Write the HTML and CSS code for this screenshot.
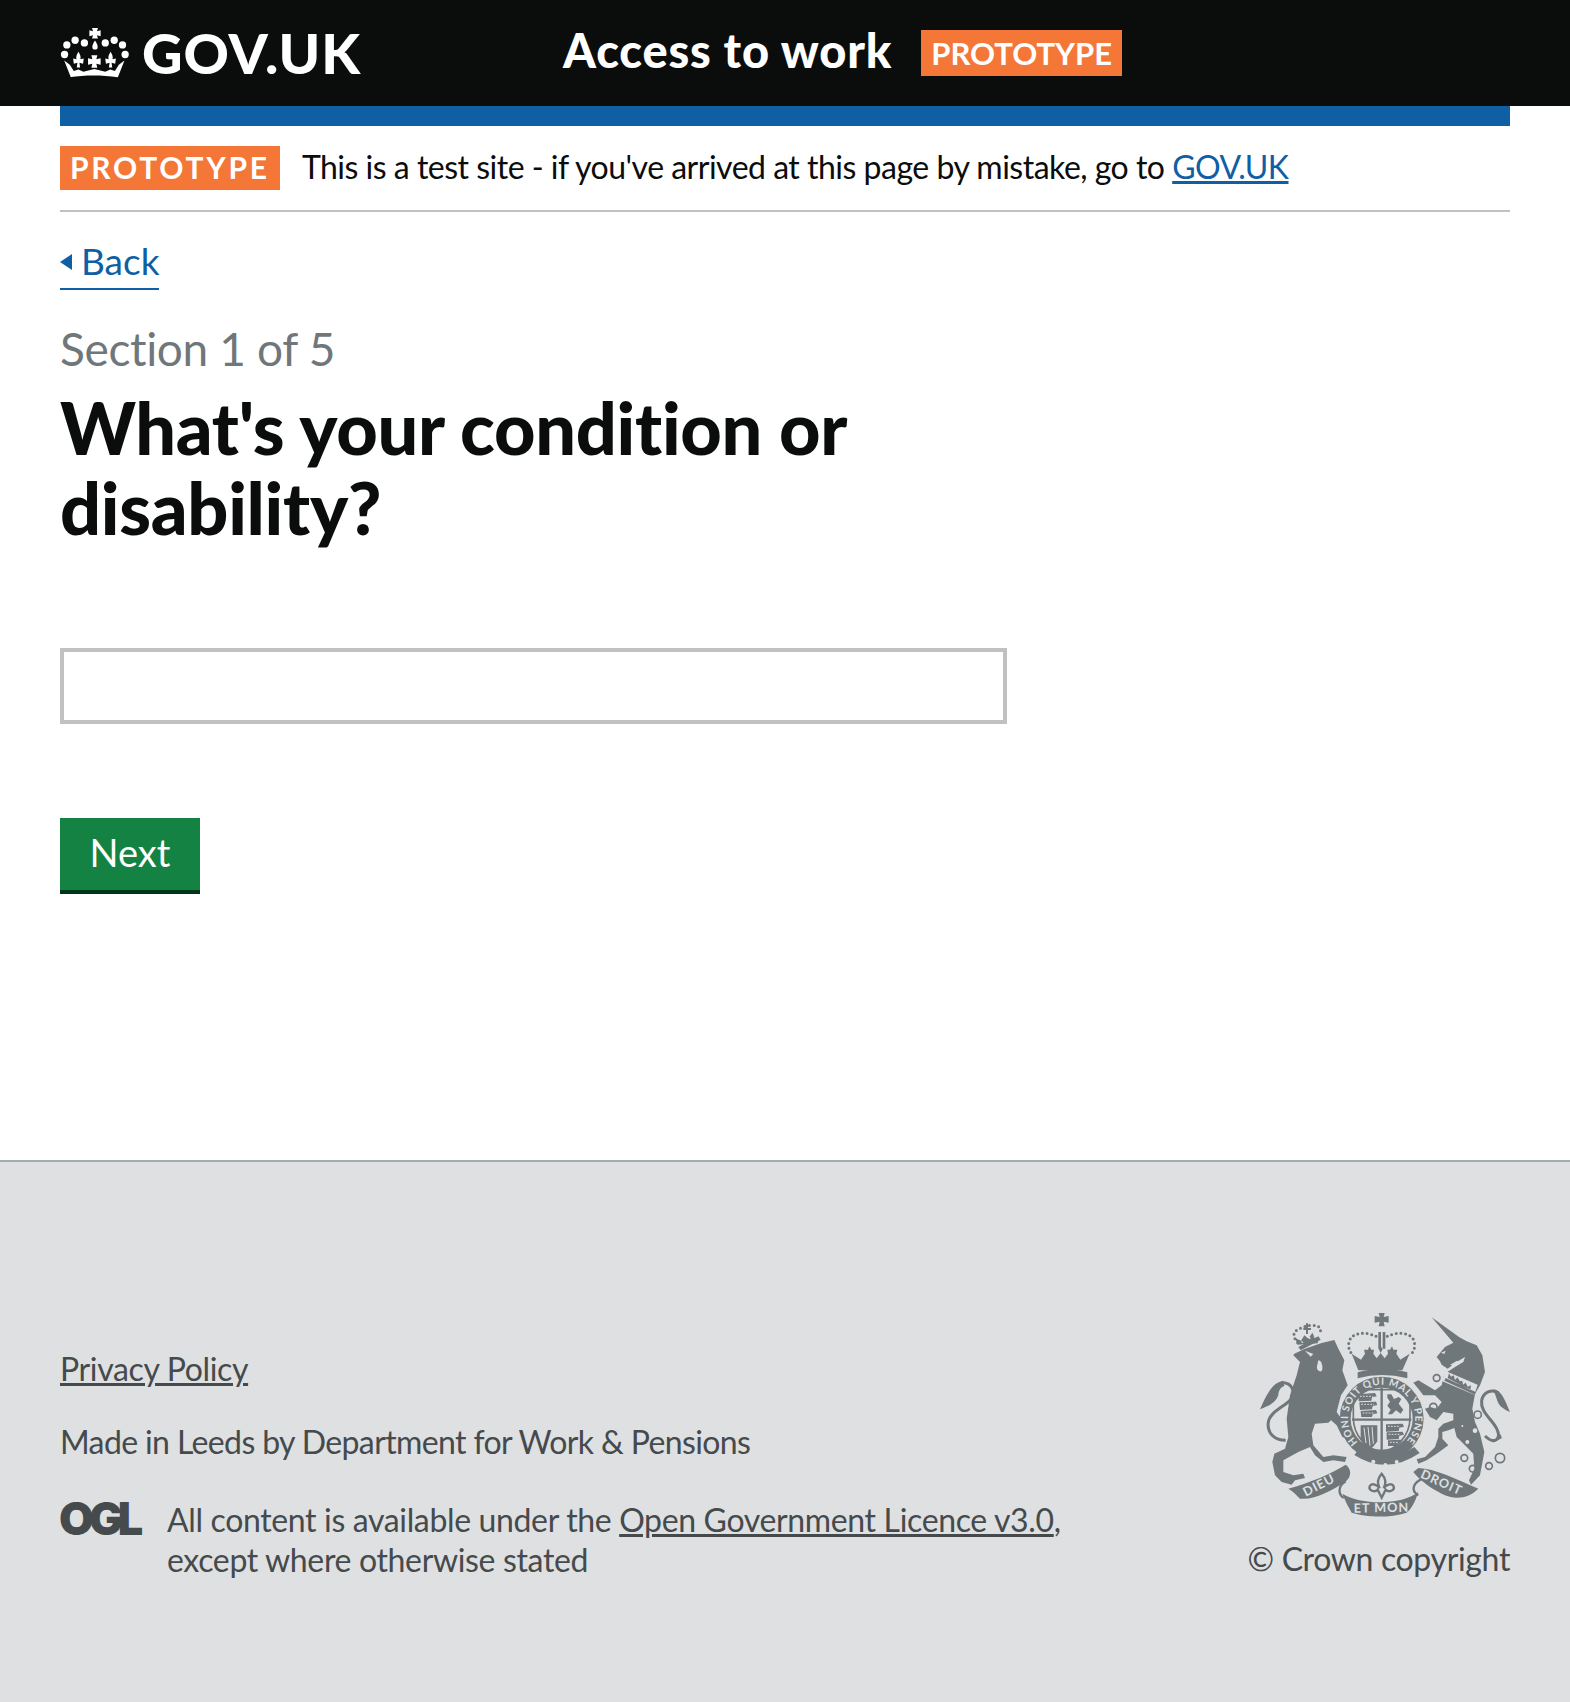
FILE: index.html
```html
<!DOCTYPE html>
<html lang="en">
<head>
<meta charset="utf-8">
<title>Access to work</title>
<link rel="stylesheet" href="styles.css">
</head>
<body>
<header class="masthead">
  <a class="logo" href="#">
    <svg class="crown" viewBox="30 45 210 160" aria-hidden="true">
      <g fill="#fff">
        <path d="M126 48h18l-3 10 11-3v18l-11-3 3 10h-18l3-10-11 3V55l11 3z"/>
        <path d="M135 86c5 8 8 13 8 19a8 8 0 0 1-16 0c0-6 3-11 8-19z"/>
        <circle cx="43" cy="128" r="11"/><circle cx="50" cy="99" r="11"/><circle cx="75" cy="85" r="11"/><circle cx="103" cy="93" r="11"/>
        <circle cx="166" cy="93" r="11"/><circle cx="193" cy="85" r="11"/><circle cx="218" cy="99" r="11"/><circle cx="226" cy="128" r="11"/>
        <path d="M85 120c5 8 8 14 6 22l10-2-2 16-11-3 2 14h-10l2-14-11 3-2-16 10 2c-2-8 1-14 6-22z"/>
        <path d="M182 120c5 8 8 14 6 22l10-2-2 16-11-3 2 14h-10l2-14-11 3-2-16 10 2c-2-8 1-14 6-22z"/>
        <path d="M124 130h18l-3 12 13-3v20l-13-3 3 12h-18l3-12-13 3v-20l13 3z"/>
        <path d="M62 197L42 146l17 13 12 19 14-5 15 7 33-8 33 8 15-7 14 5 12-19 17-13-20 51c-49-7-97-7-146 0z"/>
      </g>
    </svg>
    <span class="logo-text">GOV.UK</span>
  </a>
  <a class="service" href="#">Access to work</a>
  <strong class="head-tag">PROTOTYPE</strong>
</header>

<div class="page">
  <div class="bluebar"></div>
  <div class="phase">
    <strong class="phase-tag">PROTOTYPE</strong>
    <span class="phase-text">This is a test site - if you've arrived at this page by mistake, go to <a href="#">GOV.UK</a></span>
  </div>

  <a class="back" href="#"><span class="arrow"></span>Back</a>

  <main>
    <p class="caption">Section 1 of 5</p>
    <h1>What's your condition or disability?</h1>
    <input class="field" type="text" aria-label="What's your condition or disability?">
    <button class="next" type="button">Next</button>
  </main>
</div>

<footer class="foot">
  <div class="foot-left">
    <a class="plain" href="#">Privacy Policy</a>
    <p class="made">Made in Leeds by Department for Work &amp; Pensions</p>
    <div class="licence">
      <svg class="ogl" viewBox="0 0 82 34"><text x="-1" y="33" class="ogl-text">OGL</text></svg>
      <p>All content is available under the <a class="plain" href="#">Open Government Licence v3.0</a>, except where otherwise stated</p>
    </div>
  </div>
  <div class="foot-right">
    <svg class="crest" viewBox="15 20 750 615" aria-hidden="true">
      <g class="ink">
        <!-- lion -->
        <path d="M118 145l32-15 50-17 38-9 12 26 18 35-6 30 16 45-20 30-8 30-5 20 17 25 23 33-3 24-20-7-17-35-17-15-8 7-40 3-10 30 5 35 30 35 30-5 40 5-5 15-35-5-30 5-25-20-15-25-35 15-45 25v35l30 10 30-5 5 13-30 7-10 13-30-8-20-20-8-40 6-25 32-15 10-35-5-55 10-70 20-60 10-40-20-20z"/>
        <path class="thin" d="M92 405C60 405 35 385 40 350c5-30 45-45 65-65 20-25 5-55-25-53"/>
        <path d="M85 226C55 232 40 255 15 312c25-10 45-17 55-42 0-15 8-25 18-28z"/>
        <path class="bgfill" d="M150 136l25 10-8 8zM190 165q10 0 12 18t-8 15q-10-3-8-15z"/>
        <!-- lion crown -->
        <path d="M130 125l60-32 7 10-60 32z"/>
        <path d="M128 118l-8-20 18 8 10-16 12 10 12-18 8 16 12-4-4 20z"/>
        <path class="bgfill" d="M138 106l3 8 5-3zM160 92l3 10 5-3zM176 92l1 6 4-2z"/>
        <path class="beads" d="M128 112c-10-10-18-28-2-38 14-8 30-14 48-14 15 0 25 6 22 22"/>
        <path d="M145 68h8v-14h6v14h9v6h-9v12h-6v-12h-8z"/>

        <g transform="translate(-75 -45)">
          <!-- main crown -->
          <path d="M446 68h18l-3 12 15-3v20l-15-3 3 14h-18l3-14-15 3V77l15 3z"/>
          <path d="M445 125h8v50h-8zM458 125h8v50h-8z"/>
          <path d="M365 190l28 18 12-18-3-12 12 0 4-10 6 10 8 0-2 12 10 14 12-16-6-12 6-8 6 8-6 12 12 16 10-14-2-12 8 0 6-10 4 10 12 0-3 12 12 18 28-18-22 50h-132z"/>
          <path d="M383 246q72-22 149 0v18q-77-20-149 0z"/>
          <path class="beads" d="M438 138c-30-15-80-14-82 24-1 12 4 20 9 28"/>
          <path class="beads" d="M472 138c30-15 80-14 82 24 1 12-4 20-9 28"/>
          <!-- garter -->
          <circle cx="455" cy="385" r="126"/>
          <circle class="bgfill" cx="455" cy="385" r="93"/>
          <path class="thin-s" d="M370 298h170v85c0 55-40 90-85 108-45-18-85-53-85-108z"/>
          <path class="mid" d="M455 292v200M366 388h178"/>
          <!-- quarterings -->
          <g>
            <path d="M385 312l50-4 5 10-14 3-2 10-38 2zM388 336l50-2 4 10-14 3-2 10-36 2zM392 362l46-3 4 10-14 3-2 8-32 0z" />
            <path d="M472 312h12l8 14 14-6 8 6-8 14 14 18-8 12-14-10-12 12h-12l8-14-10-12 8-12-8-12z"/>
            <path d="M468 402l50-2 4 9-14 3-2 10-38 2zM470 426l48-2 4 9-14 3-2 10-36 2zM474 450l38-2 2 8-12 3-2 8-26 0z"/>
            <path d="M392 405h50v48c-10 15-18 22-25 28-12-10-22-25-25-40z"/>
          </g>
          <path class="bg-line" d="M402 412l6 46M414 410l6 56M426 410l4 50"/>
          <path class="bg-dash" d="M390 318h38M394 342h38M398 368h34M474 408h36M476 432h34M480 456h24"/>
          <!-- motto base -->
          <path d="M385 478q70 55 168-8l16 18q-100 68-196 6z"/>
          <circle class="bgfill" cx="430" cy="514" r="6"/><circle class="bgfill" cx="466" cy="524" r="6"/><circle class="bgfill" cx="500" cy="515" r="6"/>
          <!-- fleur -->
          <path class="thin-m" d="M455 550c14 16 14 30 6 44 6-10 24-18 30-6 4 12-14 20-24 10l-12 24-12-24c-10 10-28 2-24-10 6-12 24-4 30 6-8-14-8-28 6-44z"/>
        </g>

        <!-- unicorn -->
        <g transform="translate(390 0)">
          <path d="M140 36l82 59 23 13 30 12 17 30 8 50-15 40-15 25-8 45 8 40 15 35 13 55-13 70-27 28-6-13 16-35-3-45-25-25-25-25-7-27-18 7-18 5v20l18 20-35 25-30 20-25 10-5-13 25-7 30-30 10-30v-25l15-15 30-10v-20l-30-5-20 25-20-10-15-25 15-5 20 5 15-20-20-20h-35l-15-20-15-18 15-7 25 15 25 15 20-15 8-35 17-10 15-10 25-15 5-15-25 15-27 20-18-12-5-10-10-13 25-30 25-13z"/>
          <path class="bgfill" d="M180 196l98 42-10 30-96-40z"/>
          <path d="M178 226l92 42 2-8-90-42zM188 218l4-14 6 10 8-4 4 14 8-8 6 12 8-2 2 12 8-6 6 12 10-4-2 14z"/>
          <path class="bgfill" d="M168 142l14-6-4 10zM196 178l20-12 8 4-18 14z"/>
          <circle class="bgfill" cx="270" cy="376" r="7"/><circle class="bgfill" cx="247" cy="410" r="6"/><circle class="bgfill" cx="232" cy="362" r="3"/>
          <g class="ring">
            <circle cx="155" cy="218" r="10"/><circle cx="145" cy="305" r="11"/><circle cx="278" cy="328" r="11"/>
            <circle cx="238" cy="458" r="10"/><circle cx="263" cy="490" r="10"/><circle cx="312" cy="482" r="10"/><circle cx="345" cy="458" r="14"/>
          </g>
          <path class="thin" d="M300 392c30 28 50 8 35-22-15-30-50-50-45-85 5-25 30-35 50-23"/>
          <path d="M325 252c25 3 35 33 50 68-25-12-35-20-40-40zM345 385c5 8 5 10 5 14l-35 18 14-8z"/>
        </g>

        <!-- ribbons -->
        <path d="M100 550c70-20 130-45 172-72 23 17 13 42-2 52-40 25-90 55-135 50-10-10-20-22-35-30z"/>
        <path class="thin-m" d="M272 528c-25 15-22 40-6 50M505 520c-30 10-40 35-15 50"/>
        <path d="M262 565c58 35 178 35 228 -5-10 30-20 50-35 62-55 18-125 13-165 0-10-17-20-37-28-57z"/>
        <path d="M490 488c50 2 110 32 180 62-30 30-70 35-110 15-40-20-70-45-85-65z"/>
      </g>
      <g class="scroll-text">
        <text transform="translate(152 574) rotate(-27)">DIEU</text>
        <text transform="translate(296 622) rotate(-1)">ET MON</text>
        <text transform="translate(494 516) rotate(24)">DROIT</text>
      </g>
      <g class="garter-text">
        <path id="ring" d="M309 411a101 101 0 1 1 142 0" fill="none"/>
        <text><textPath href="#ring" textLength="470">HONI SOIT QUI MAL Y PENSE</textPath></text>
      </g>
    </svg>
    <span class="copy">© Crown copyright</span>
  </div>
</footer>
</body>
</html>
```
FILE: styles.css
```css
* { box-sizing: border-box; }
html, body { margin: 0; padding: 0; }
body {
  font-family: "Lato", "Noto Sans", sans-serif;
  font-variant-ligatures: none;
  color: #0b0c0c;
  background: #fff;
  height: 1702px;
  display: flex;
  flex-direction: column;
}

.masthead {
  height: 106px;
  background: #0b0c0c;
  display: flex;
  align-items: center;
  padding-left: 60px;
}
.logo {
  display: flex;
  align-items: center;
  gap: 12px;
  width: 503px;
  color: #fff;
  text-decoration: none;
}
.crown { width: 70px; height: 53px; display: block; }
.logo-text { font-size: 56px; font-weight: 900; line-height: 1; letter-spacing: 1px; }
.service { color: #fff; font-size: 47px; font-weight: 900; letter-spacing: 0.8px; text-decoration: none; padding-bottom: 6px; }
.head-tag {
  margin-left: 29px;
  background: #f47738;
  color: #fff;
  font-size: 31px;
  line-height: 46px;
  padding: 0 10px;
}

.page { padding: 0 60px; flex: 1; }
.bluebar { height: 20px; background: #0f5fa5; }
.phase {
  height: 86px;
  display: flex;
  align-items: center;
  gap: 22px;
  border-bottom: 2px solid #bfc1c3;
}
.phase-tag {
  background: #f47738;
  color: #fff;
  font-size: 30px;
  line-height: 43px;
  letter-spacing: 2.75px;
  padding: 0 10px 1px;
}
.phase-text { font-size: 32px; letter-spacing: -0.5px; padding-bottom: 4px; }
.phase-text a { color: #0f5fa5; }

.back {
  display: inline-block;
  margin-top: 30px;
  height: 48px;
  color: #0f5fa5;
  font-size: 37px;
  line-height: 38px;
  text-decoration: none;
  border-bottom: 2px solid #0f5fa5;
}
.arrow {
  display: inline-block;
  width: 0;
  height: 0;
  border-style: solid;
  border-width: 8px 12px 8px 0;
  border-color: transparent #0f5fa5 transparent transparent;
  margin-right: 9px;
  vertical-align: 5px;
}

.caption { margin: 29px 0 0; color: #6f777b; font-size: 46px; letter-spacing: -0.35px; line-height: 60px; }
h1 {
  margin: 8px 0 0;
  width: 900px;
  font-size: 72px;
  line-height: 80px;
  font-weight: 900;
  letter-spacing: -0.3px;
}
.field {
  display: block;
  margin-top: 101px;
  width: 947px;
  height: 76px;
  border: 4px solid #bfc1c3;
  background: #fff;
  border-radius: 0;
  outline: 0;
}
.next {
  display: block;
  margin-top: 94px;
  width: 140px;
  height: 76px;
  background: #138243;
  color: #fff;
  border: 0;
  border-bottom: 4px solid #003618;
  font-family: inherit;
  font-size: 38px;
  padding: 0 0 4px;
}

.foot {
  height: 542px;
  background: #dee0e2;
  border-top: 2px solid #a1acb2;
  padding: 150px 60px 0;
  display: flex;
  justify-content: space-between;
  color: #454a4c;
  font-size: 32px;
  letter-spacing: -0.35px;
}
.foot p { margin: 0; }
.foot-left { padding-top: 37px; display: flex; flex-direction: column; align-items: flex-start; }
.plain { color: #454a4c; }
.foot .made { margin-top: 34px; line-height: 40px; letter-spacing: -0.62px; }
.licence { display: flex; gap: 25px; margin-top: 38px; width: 1010px; line-height: 40px; }
.ogl { width: 82px; height: 34px; flex: none; margin-top: 2px; overflow: visible; }
.ogl-text { font-family: "Inter", sans-serif; font-weight: 900; font-size: 45px; letter-spacing: -5px; fill: #454a4c; }
.foot-right { display: flex; flex-direction: column; align-items: flex-end; }
.crest { width: 250px; height: 205px; display: block; }
.ink { fill: #6f777b; }
.bgfill { fill: #dee0e2; }
.thin { fill: none; stroke: #6f777b; stroke-width: 9; }
.thin-m { fill: none; stroke: #6f777b; stroke-width: 7; }
.thin-s { fill: none; stroke: #6f777b; stroke-width: 5; }
.mid { fill: none; stroke: #6f777b; stroke-width: 7; }
.ring { fill: none; stroke: #6f777b; stroke-width: 5; }
.beads { fill: none; stroke: #6f777b; stroke-width: 9; stroke-linecap: round; stroke-dasharray: 0 14; }
.bg-line { fill: none; stroke: #dee0e2; stroke-width: 3; }
.bg-dash { fill: none; stroke: #dee0e2; stroke-width: 3; stroke-dasharray: 5 4; }
.scroll-text { fill: #dee0e2; font-family: "Lato", sans-serif; font-weight: 700; font-size: 38px; letter-spacing: 3px; }
.garter-text { fill: #dee0e2; font-family: "Lato", sans-serif; font-weight: 700; font-size: 30px; letter-spacing: 0; }
.copy { margin-top: 22px; line-height: 40px; }
```
